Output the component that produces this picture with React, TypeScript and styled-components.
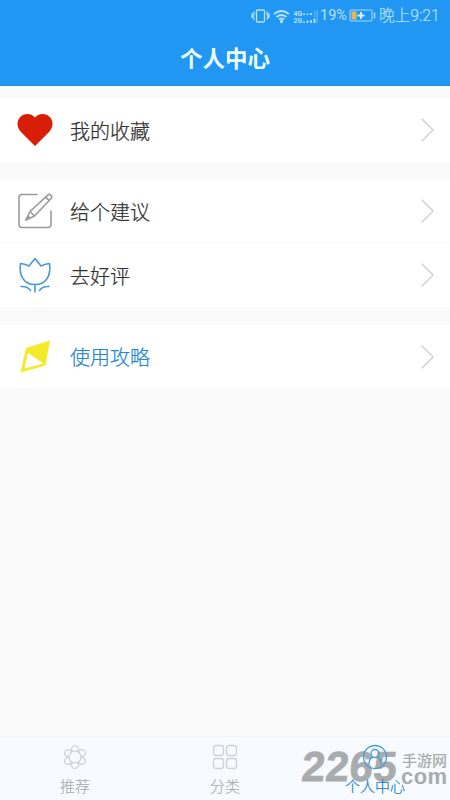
import React from 'react';
import styled, { createGlobalStyle } from 'styled-components';

const Global = createGlobalStyle`
  * { box-sizing: border-box; }
  body { margin: 0; background: #fafafa; font-family: Roboto, "Noto Sans CJK SC", sans-serif; }
`;
const Screen = styled.div`
  position: relative;
  isolation: isolate;
  display: flex;
  flex-direction: column;
  width: 450px;
  height: 800px;
  overflow: hidden;
  background: #fafafa;
`;
const Header = styled.header`
  height: 86px;
  background: #2196f3;
  border-bottom: 1px solid #1e8fe8;
`;
const StatusBar = styled.div`
  height: 31px;
  display: flex;
  align-items: center;
  padding: 0 10px 0 251px;
  color: #b5e2fc;
  white-space: nowrap;
`;
const StatusText = styled.span<{ $size: number; $left: number }>`
  font-size: ${p => p.$size}px;
  font-weight: 400;
  line-height: 30px;
  margin-left: ${p => p.$left}px;
`;
const Clock = styled(StatusText)`
  font-weight: 300;
  padding-top: 1px;
  -webkit-text-stroke: 0.2px currentColor;
`;
const Title = styled.h1`
  margin: 0;
  height: 55px;
  line-height: 57px;
  text-align: center;
  color: #ecfdff;
  font-size: 22.5px;
  font-weight: 700;
`;
const List = styled.main`
  flex: 1;
  padding-top: 11px;
  border-top: 1px solid #fdf8f3;
`;
const Group = styled.section`
  background: #fff;
  margin-bottom: 18px;
`;
const Row = styled.div<{ $height: number; $divided?: boolean }>`
  height: ${p => p.$height}px;
  display: flex;
  align-items: center;
  padding: 0 16px 0 17px;
  border-bottom: ${p => (p.$divided ? '1px solid #f9f9f9' : 'none')};
`;
const Label = styled.span<{ $active?: boolean }>`
  flex: 1;
  margin-left: 17px;
  padding-top: ${p => (p.$active ? 0 : 1)}px;
  font-size: 20px;
  line-height: 30px;
  font-family: "Noto Sans CJK SC", sans-serif;
  font-weight: 300;
  -webkit-text-stroke: 0.25px currentColor;
  color: ${p => (p.$active ? '#2589cf' : '#333')};
`;
const TabBar = styled.nav`
  height: 64px;
  display: grid;
  grid-template-columns: repeat(3, 1fr);
  background: #f7fafe;
  border-top: 1px solid #f1f3f7;
`;
const Tab = styled.div<{ $active?: boolean }>`
  z-index: 2;
  display: flex;
  flex-direction: column;
  align-items: center;
  padding-top: 7px;
  gap: 7px;
  font-size: 15px;
  line-height: 20px;
  font-weight: 300;
  -webkit-text-stroke: 0.2px currentColor;
  color: ${p => (p.$active ? '#1c80c8' : '#acafb2')};
`;
const Watermark = styled.div`
  position: absolute;
  z-index: 1;
  left: 302px;
  top: 745px;
  display: flex;
  color: #a9acaf;
  font-weight: 700;
`;
const BigMark = styled.span`
  font-family: "Liberation Sans", sans-serif;
  font-size: 42px;
  line-height: 43px;
  width: 99px;
  letter-spacing: 0.5px;
  transform: skewX(-5deg);
  -webkit-text-stroke: 0.8px #a9acaf;
  paint-order: stroke;
  stroke-linejoin: round;
`;
const MarkSide = styled.span`
  display: flex;
  flex-direction: column;
  width: 50px;
`;
const MarkName = styled.span`
  font: 500 15px/15px "Noto Sans CJK SC", sans-serif;
  margin: 7px 0 0 1px;
`;
const MarkDomain = styled.span`
  font: 700 22px/16px "Liberation Sans", sans-serif;
  letter-spacing: 0.4px;
  margin-top: 2px;
`;

const stroke = { fill: 'none', strokeLinecap: 'round' as const, strokeLinejoin: 'round' as const };

const Heart = () => (
  <svg width="36" height="36" viewBox="0 0 36 36">
    <path d="M18 34 4 20C-.5 15.500-.5 9 3 5.300 7 1 14 .8 18 5.500 22 .8 29 1 33 5.300 36.500 9 36.500 15.500 32 20Z" fill="#d81e06" />
  </svg>
);
const Pencil = () => (
  <svg width="36" height="38" viewBox="0 0 36 38" {...stroke} stroke="#9b9b9b" strokeWidth="1.600">
    <path d="M20 2.500H5q-3 0-3 3v27q0 3 3 3h26q3 0 3-3V19" />
    <path d="m9 28 4-8.500L31 2.800q1.500-1 2.800.3t1 2.700L17.500 24ZM13 19.500l4.500 4.500M28.500 5.200l3.800 3.400" />
    <path d="m9 28 2-4 1.500 1.500Z" fill="#9b9b9b" />
  </svg>
);
const Tulip = () => (
  <svg width="36" height="36" viewBox="0 0 36 36" {...stroke} stroke="#469bd6" strokeWidth="1.600">
    <path d="M3.500 6.500q4 .2 8.500 2.500l6-7.500L24 9q4.500-2.300 8.500-2.500c1.800 11.500-3 21-14.500 21S1.700 18 3.500 6.500ZM18 27.500V35M4 29.500q6.500-.500 9.500 4M32 29.500q-6.500-.500-9.500 4" />
  </svg>
);
const Diamond = () => (
  <svg width="36" height="36" viewBox="0 0 36 36">
    <path fillRule="evenodd" fill="#f4ea2a" d="M9 9 33 1.500 28.500 26.500 3.500 33.500ZM11 14 7.500 29.500 26.500 24.500Z" />
  </svg>
);
const Chevron = () => (
  <svg width="16" height="26" viewBox="0 0 16 26" {...stroke} stroke="#d2d2d2" strokeWidth="1.500">
    <path d="m4 2 11 11-11 11" />
  </svg>
);
const StatusIcons = () => (
  <svg width="67" height="18" viewBox="0 0 67 18" fill="none" stroke="#b5e2fc" strokeWidth="1.300">
    <rect x="5.500" y="3" width="8" height="12" rx="1" />
    <path d="M3 4.500v3l-1 2 1 3M1 6v5M16 4.500v3l1 2-1 3M18 6v5" />
    <path d="M23 7q7.500-6 15 0M25.500 10q5-4 10 0M28 12.500q2.500-2 5 0" strokeWidth="1.700" />
    <circle cx="30.500" cy="14.500" r="1" fill="#b5e2fc" />
    <path d="M53 8V6.500M56.500 8V6.500M60 8V6M53 16v-1.500M56.500 16v-2.500M60 16v-3M63.500 16v-4.500" strokeWidth="1.800" />
    <path d="M63.500 10V4M66 16V3" opacity=".35" strokeWidth="1.600" />
    <text x="42.500" y="8.500" fontSize="7" fontWeight="700" fill="#b5e2fc" stroke="none">4G</text>
    <text x="42.500" y="16" fontSize="7" fontWeight="700" fill="#b5e2fc" stroke="none">2G</text>
  </svg>
);
const Battery = () => (
  <svg width="29" height="14" viewBox="-2 0 29 14">
    <rect x="1" y="1" width="22" height="11" rx="1" fill="none" stroke="#a6d9f7" />
    <path d="M2.500 2.500h5v8h-5Z" fill="#e7b552" />
    <path d="M12 3v7M8.500 6.500h7" stroke="#d9f2ff" strokeWidth="1.800" />
    <path d="M25.500 3.500v6" stroke="#a6d9f7" strokeWidth="1.500" />
  </svg>
);
const Atom = () => (
  <svg width="26" height="26" viewBox="0 0 26 26" {...stroke} stroke="#cfd2d5" strokeWidth="1.200">
    <circle cx="13" cy="13" r="6" />
    {[0, 60, 120, 180, 240, 300].map(a => (
      <path key={a} transform={`rotate(${a} 13 13)`} d="M9 8.500c0-4 1.500-7 4-7s4 3 4 7" />
    ))}
  </svg>
);
const Grid = () => (
  <svg width="26" height="26" viewBox="0 0 26 26" {...stroke} stroke="#cfd2d5" strokeWidth="1.300">
    <rect x="1.500" y="1.500" width="10" height="10" rx="2.500" />
    <rect x="14.500" y="1.500" width="10" height="10" rx="2.500" />
    <rect x="1.500" y="14.500" width="10" height="10" rx="2.500" />
    <rect x="14.500" y="14.500" width="10" height="10" rx="2.500" />
  </svg>
);
const Person = () => (
  <svg width="26" height="26" viewBox="0 0 26 26" {...stroke} stroke="#449bd5" strokeWidth="1.300">
    <circle cx="13" cy="13" r="11.500" />
    <circle cx="13" cy="9.500" r="4" />
    <path d="M7 19.500q.5-6 4-6.500M19 19.500q-.5-6-4-6.500" />
  </svg>
);

export default function App() {
  return (
    <Screen>
      <Global />
      <Header>
        <StatusBar>
          <StatusIcons />
          <StatusText $size={14.5} $left={2}>19%</StatusText>
          <Battery />
          <Clock $size={15.7} $left={3}>晚上9:21</Clock>
        </StatusBar>
        <Title>个人中心</Title>
      </Header>
      <List>
        <Group>
          <Row $height={64}><Heart /><Label>我的收藏</Label><Chevron /></Row>
        </Group>
        <Group>
          <Row $height={63} $divided><Pencil /><Label>给个建议</Label><Chevron /></Row>
          <Row $height={64}><Tulip /><Label>去好评</Label><Chevron /></Row>
        </Group>
        <Group>
          <Row $height={63}><Diamond /><Label $active>使用攻略</Label><Chevron /></Row>
        </Group>
      </List>
      <TabBar>
        <Tab><Atom />推荐</Tab>
        <Tab><Grid />分类</Tab>
        <Tab $active><Person />个人中心</Tab>
      </TabBar>
      <Watermark>
        <BigMark>2265</BigMark>
        <MarkSide><MarkName>手游网</MarkName><MarkDomain>com</MarkDomain></MarkSide>
      </Watermark>
    </Screen>
  );
}
